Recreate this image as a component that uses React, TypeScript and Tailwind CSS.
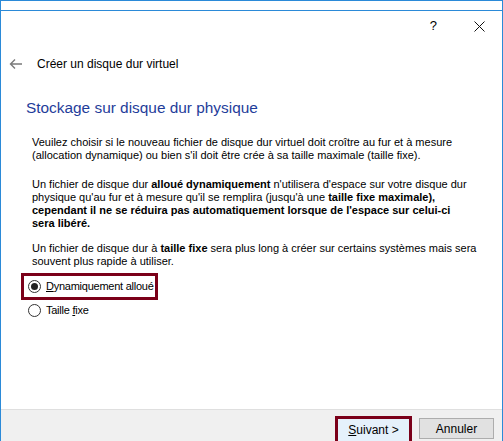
import React from 'react';

const body = "font-['Liberation_Sans',Arial,sans-serif]";
const ui = "font-['Liberation_Sans',Arial,sans-serif]";

function Radio({ checked }: { checked?: boolean }) {
  return (
    <span className="w-[13px] h-[13px] rounded-full border border-[#333] bg-white flex items-center justify-center shrink-0">
      {checked && <span className="w-[7px] h-[7px] rounded-full bg-[#222]" />}
    </span>
  );
}

export default function App() {
  return (
    <div className="w-[503px] h-[441px] bg-white border-x border-t border-[#2b8ad8] flex flex-col overflow-hidden text-black">
      <div className="h-[10px] border-b border-[#2b8ad8] shrink-0" />

      <div className={`h-[23px] mt-[3px] flex items-center justify-end pr-[17px] gap-[37px] text-[13px] ${ui}`}>
        <span className="leading-none">?</span>
        <svg width="11" height="11" viewBox="0 0 11 11" className="mt-[1px]">
          <path d="M0.5 0.5 L10.5 10.5 M10.5 0.5 L0.5 10.5" stroke="#111" strokeWidth="1" />
        </svg>
      </div>

      <div className={`mt-[17px] h-[20px] flex items-center pl-[8px] text-[12px] whitespace-nowrap ${ui}`}>
        <svg width="14" height="12" viewBox="0 0 14 12">
          <path d="M13 6 H1.5 M6 1.5 L1.5 6 L6 10.5" stroke="#7a7a7a" strokeWidth="1.4" fill="none" />
        </svg>
        <span className="ml-[14px]">Créer un disque dur virtuel</span>
      </div>

      <div className={`mt-[24px] pl-[25px] text-[15.4px] leading-[20px] text-[#1f3d9a] whitespace-nowrap ${ui}`}>
        Stockage sur disque dur physique
      </div>

      <div className={`pl-[31px] mt-[18px] text-[11px] leading-[13px] ${body}`}>
        <p>
          Veuilez choisir si le nouveau fichier de disque dur virtuel doit croître au fur et à mesure<br />
          (allocation dynamique) ou bien s'il doit être crée à sa taille maximale (taille fixe).
        </p>
        <p className="mt-[16px]">
          Un fichier de disque dur <b>alloué dynamiquement</b> n'utilisera d'espace sur votre disque dur<br />
          physique qu'au fur et à mesure qu'il se remplira (jusqu'à une <b>taille fixe maximale),</b><br />
          <b>cependant il ne se réduira pas automatiquement lorsque de l'espace sur celui-ci</b><br />
          <b>sera libéré.</b>
        </p>
        <p className="mt-[12px]">
          Un fichier de disque dur à <b>taille fixe</b> sera plus long à créer sur certains systèmes mais sera<br />
          souvent plus rapide à utiliser.
        </p>
      </div>

      <div className={`pl-[20px] mt-[5px] text-[11px] tracking-[-0.25px] whitespace-nowrap ${ui}`}>
        <div className="w-[137px] h-[27px] border-[3px] border-[#7b0019] flex items-center pl-[4px] gap-[5px]">
          <Radio checked />
          <span><span className="underline">D</span>ynamiquement alloué</span>
        </div>
        <div className="h-[20px] flex items-center pl-[7px] gap-[5px]">
          <Radio />
          <span>Taille <span className="underline">f</span>ixe</span>
        </div>
      </div>

      <div className="flex-1" />

      <div className={`h-[32px] shrink-0 border-t border-[#dfdfdf] bg-[#f0f0f0] flex items-start justify-end pr-[8px] pt-[6px] gap-[7px] text-[12px] ${ui}`}>
        <div className="w-[77px] h-[30px] border-[3px] border-[#7b0019] bg-[#e5f1fb] flex items-start justify-center pt-[2px]">
          <span><span className="underline">S</span>uivant &gt;</span>
        </div>
        <div className="w-[75px] h-[21px] mt-[2px] border border-[#adadad] bg-[#e1e1e1] flex items-center justify-center">
          Annuler
        </div>
      </div>
    </div>
  );
}
